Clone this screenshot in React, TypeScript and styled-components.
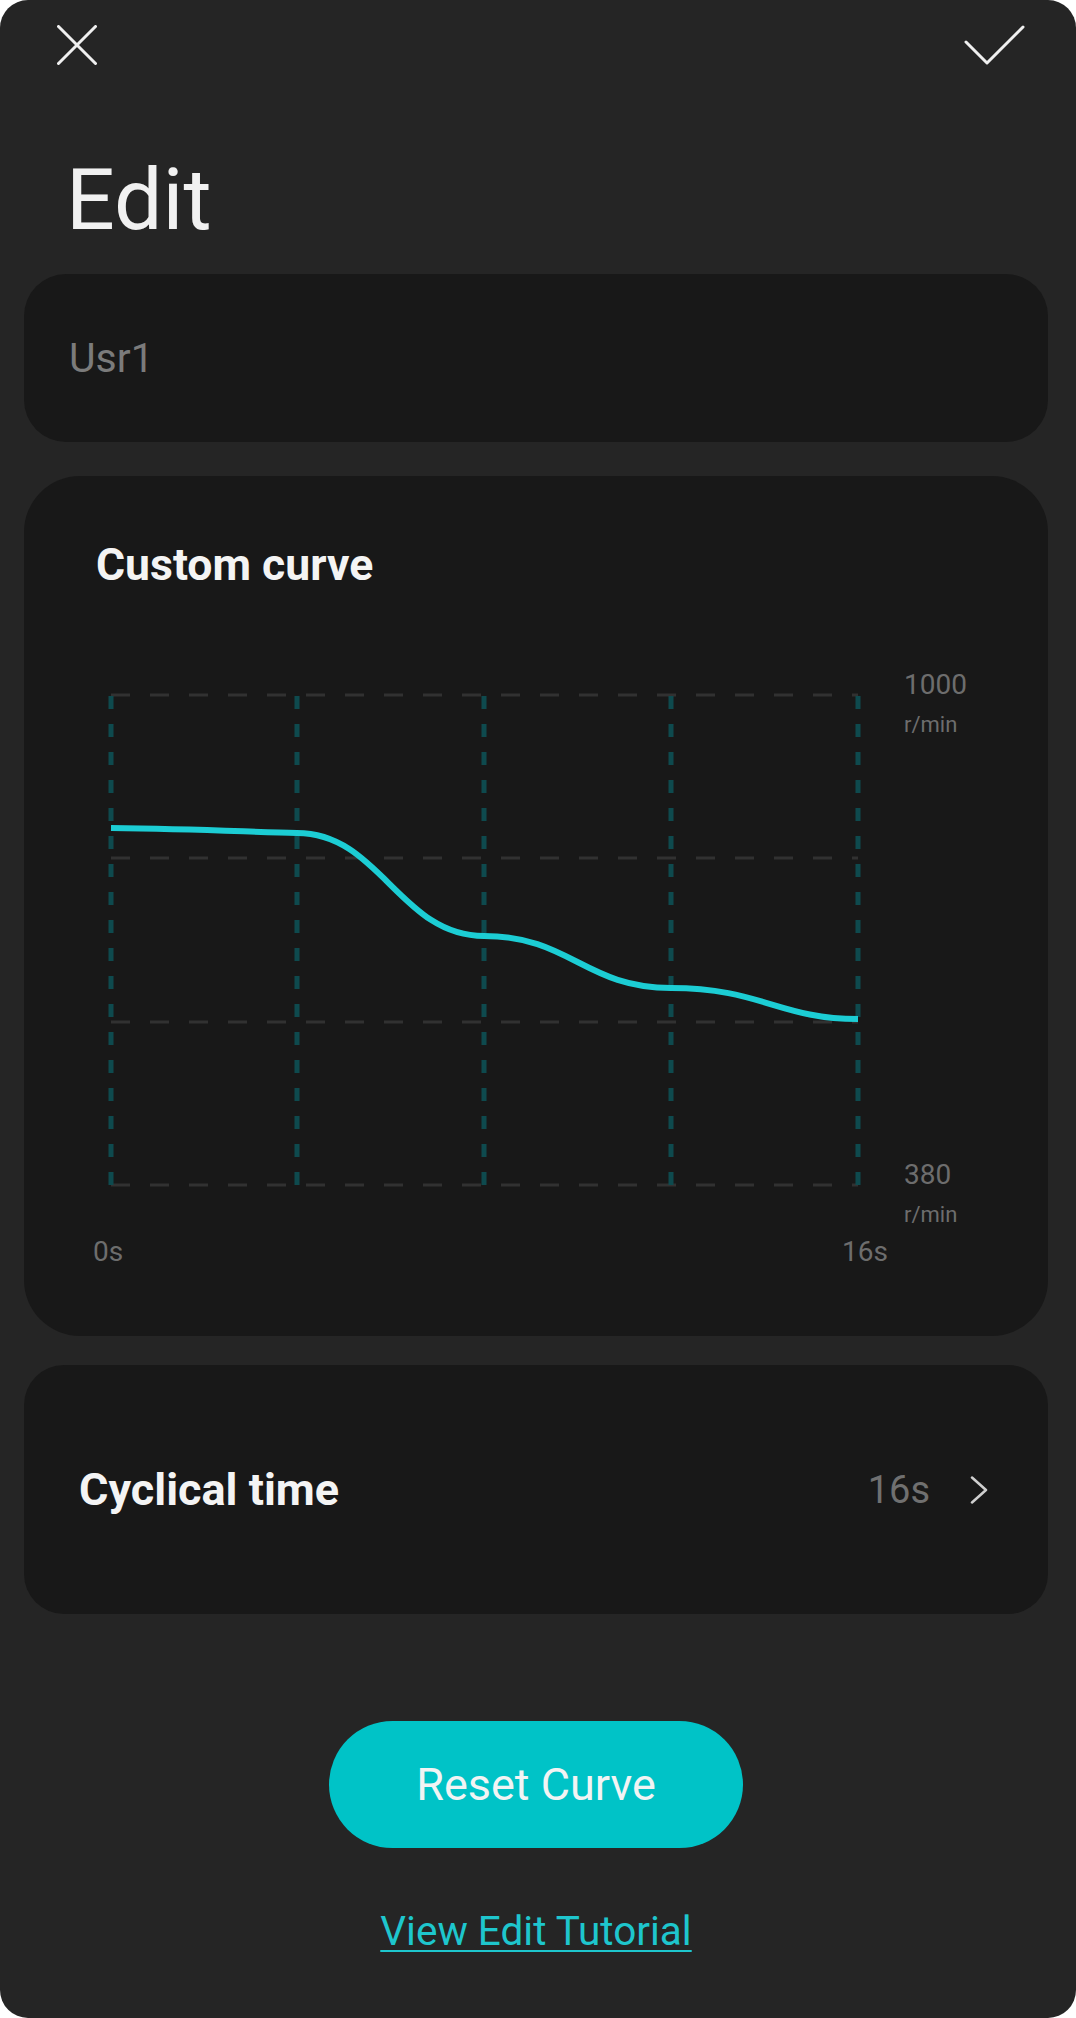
import React from "react";
import styled, { createGlobalStyle } from "styled-components";

const GlobalStyle = createGlobalStyle`
  html, body {
    margin: 0;
    padding: 0;
    background: #ffffff;
  }
  * { box-sizing: border-box; }
`;

const Screen = styled.div`
  width: 1076px;
  height: 2018px;
  background: #252525;
  border-radius: 28px;
  overflow: hidden;
  font-family: Roboto, "Noto Sans", "Liberation Sans", sans-serif;
  color: #f1f1f1;
  display: flex;
  flex-direction: column;
`;

const Header = styled.div`
  display: flex;
  justify-content: space-between;
  align-items: center;
  padding: 25px 50px 0 57px;
  height: 65px;
`;

const IconButton = styled.div`
  display: flex;
  align-items: center;
  justify-content: center;
  line-height: 0;
`;

const Title = styled.h1`
  margin: 92px 0 0 66px;
  font-size: 86px;
  font-weight: 400;
  line-height: 86px;
  color: #f1f1f1;
`;

const Card = styled.section<{ $radius: number }>`
  margin: 0 28px 0 24px;
  background: #181818;
  border-radius: ${(p) => p.$radius}px;
`;

const NameCard = styled(Card)`
  margin-top: 31px;
  height: 168px;
  display: flex;
  align-items: center;
  padding-left: 45px;
`;

const NameText = styled.span`
  font-size: 41px;
  color: #7b7b7b;
  line-height: 1;
`;

const ChartCard = styled(Card)`
  margin-top: 34px;
  height: 860px;
  padding: 67px 0 0 72px;
`;

const CardTitle = styled.h2`
  margin: 0;
  font-size: 44.5px;
  font-weight: 700;
  line-height: 44px;
  color: #f4f4f4;
`;

const ChartRow = styled.div`
  margin-top: 81px;
  display: flex;
  align-items: flex-start;
`;

const Plot = styled.svg`
  display: block;
  margin-top: 22px;
  flex: none;
`;

const Axis = styled.div`
  padding-left: 34px;
  height: 562px;
  display: flex;
  flex-direction: column;
  justify-content: space-between;
`;

const AxisGroup = styled.div`
  display: flex;
  flex-direction: column;
  gap: 8px;
`;

const AxisValue = styled.span`
  font-size: 28px;
  line-height: 34px;
  color: #6d6d6d;
`;

const AxisUnit = styled.span`
  font-size: 22px;
  line-height: 30px;
  color: #6d6d6d;
`;

const XLabels = styled.div`
  margin: 5px 0 0 -3px;
  width: 795px;
  display: flex;
  justify-content: space-between;
`;

const CycleCard = styled(Card)`
  margin-top: 29px;
  height: 249px;
  display: flex;
  align-items: center;
  justify-content: space-between;
  padding: 0 60px 0 55px;
`;

const RowLabel = styled.span`
  font-size: 45px;
  font-weight: 700;
  color: #f4f4f4;
  line-height: 1;
`;

const RowValue = styled.div`
  display: flex;
  align-items: center;
  gap: 40px;
`;

const ValueText = styled.span`
  font-size: 38px;
  color: #707070;
  line-height: 1;
`;

const Actions = styled.div`
  margin-top: 107px;
  padding-right: 4px;
  display: flex;
  flex-direction: column;
  align-items: center;
`;

const ResetButton = styled.button`
  width: 414px;
  height: 127px;
  border: none;
  border-radius: 64px;
  background: #00c3c7;
  color: #f2f4f4;
  font-family: Roboto, "Noto Sans", "Liberation Sans", sans-serif;
  font-size: 45px;
  font-weight: 400;
  display: flex;
  align-items: center;
  justify-content: center;
  padding: 0;
  cursor: pointer;
`;

const TutorialLink = styled.a`
  margin-top: 63px;
  font-size: 40.5px;
  line-height: 40px;
  color: #1ec6cd;
  text-decoration: underline;
  text-decoration-thickness: 2px;
  text-underline-offset: 5px;
  cursor: pointer;
`;

const vLines = [111, 297, 484, 671, 858];
const hLines = [695, 858, 1022, 1185];

export default function App() {
  return (
    <>
      <GlobalStyle />
      <Screen>
        <Header>
          <IconButton>
            <svg width="40" height="40" viewBox="0 0 40 40">
              <path
                d="M1.5 1.5 L38.5 38.5 M38.5 1.5 L1.5 38.5"
                stroke="#f0f0f0"
                strokeWidth="3"
                strokeLinecap="round"
                fill="none"
              />
            </svg>
          </IconButton>
          <IconButton>
            <svg width="62" height="40" viewBox="0 0 62 40">
              <path
                d="M2 17 L23 38 L59 2"
                stroke="#f0f0f0"
                strokeWidth="3"
                strokeLinecap="round"
                strokeLinejoin="round"
                fill="none"
              />
            </svg>
          </IconButton>
        </Header>

        <Title>Edit</Title>

        <NameCard $radius={42}>
          <NameText>Usr1</NameText>
        </NameCard>

        <ChartCard $radius={56}>
          <CardTitle>Custom curve</CardTitle>
          <ChartRow>
            <Plot width="774" height="500" viewBox="96 690 774 500">
              {hLines.map((y) => (
                <line
                  key={`h${y}`}
                  x1="111"
                  x2="858"
                  y1={y}
                  y2={y}
                  stroke="#313131"
                  strokeWidth="3"
                  strokeDasharray="19 20"
                />
              ))}
              {vLines.map((x) => (
                <line
                  key={`v${x}`}
                  x1={x}
                  x2={x}
                  y1="696"
                  y2="1186"
                  stroke="#0e4a4e"
                  strokeWidth="5"
                  strokeDasharray="13 15"
                />
              ))}
              <path
                d="M111 828 C 200 829, 250 832, 297 833 C 380 833, 400 936, 484 936 C 570 936, 585 988, 671 988 C 760 988, 780 1019, 858 1019"
                stroke="#1ccdd4"
                strokeWidth="6"
                fill="none"
              />
            </Plot>
            <Axis>
              <AxisGroup>
                <AxisValue>1000</AxisValue>
                <AxisUnit>r/min</AxisUnit>
              </AxisGroup>
              <AxisGroup>
                <AxisValue>380</AxisValue>
                <AxisUnit>r/min</AxisUnit>
              </AxisGroup>
            </Axis>
          </ChartRow>
          <XLabels>
            <AxisValue>0s</AxisValue>
            <AxisValue>16s</AxisValue>
          </XLabels>
        </ChartCard>

        <CycleCard $radius={40}>
          <RowLabel>Cyclical time</RowLabel>
          <RowValue>
            <ValueText>16s</ValueText>
            <svg width="18" height="28" viewBox="0 0 18 28">
              <path
                d="M2 1.5 L16 14 L2 26.5"
                stroke="#cfcfcf"
                strokeWidth="2.5"
                strokeLinecap="round"
                strokeLinejoin="round"
                fill="none"
              />
            </svg>
          </RowValue>
        </CycleCard>

        <Actions>
          <ResetButton>Reset Curve</ResetButton>
          <TutorialLink>View Edit Tutorial</TutorialLink>
        </Actions>
      </Screen>
    </>
  );
}
